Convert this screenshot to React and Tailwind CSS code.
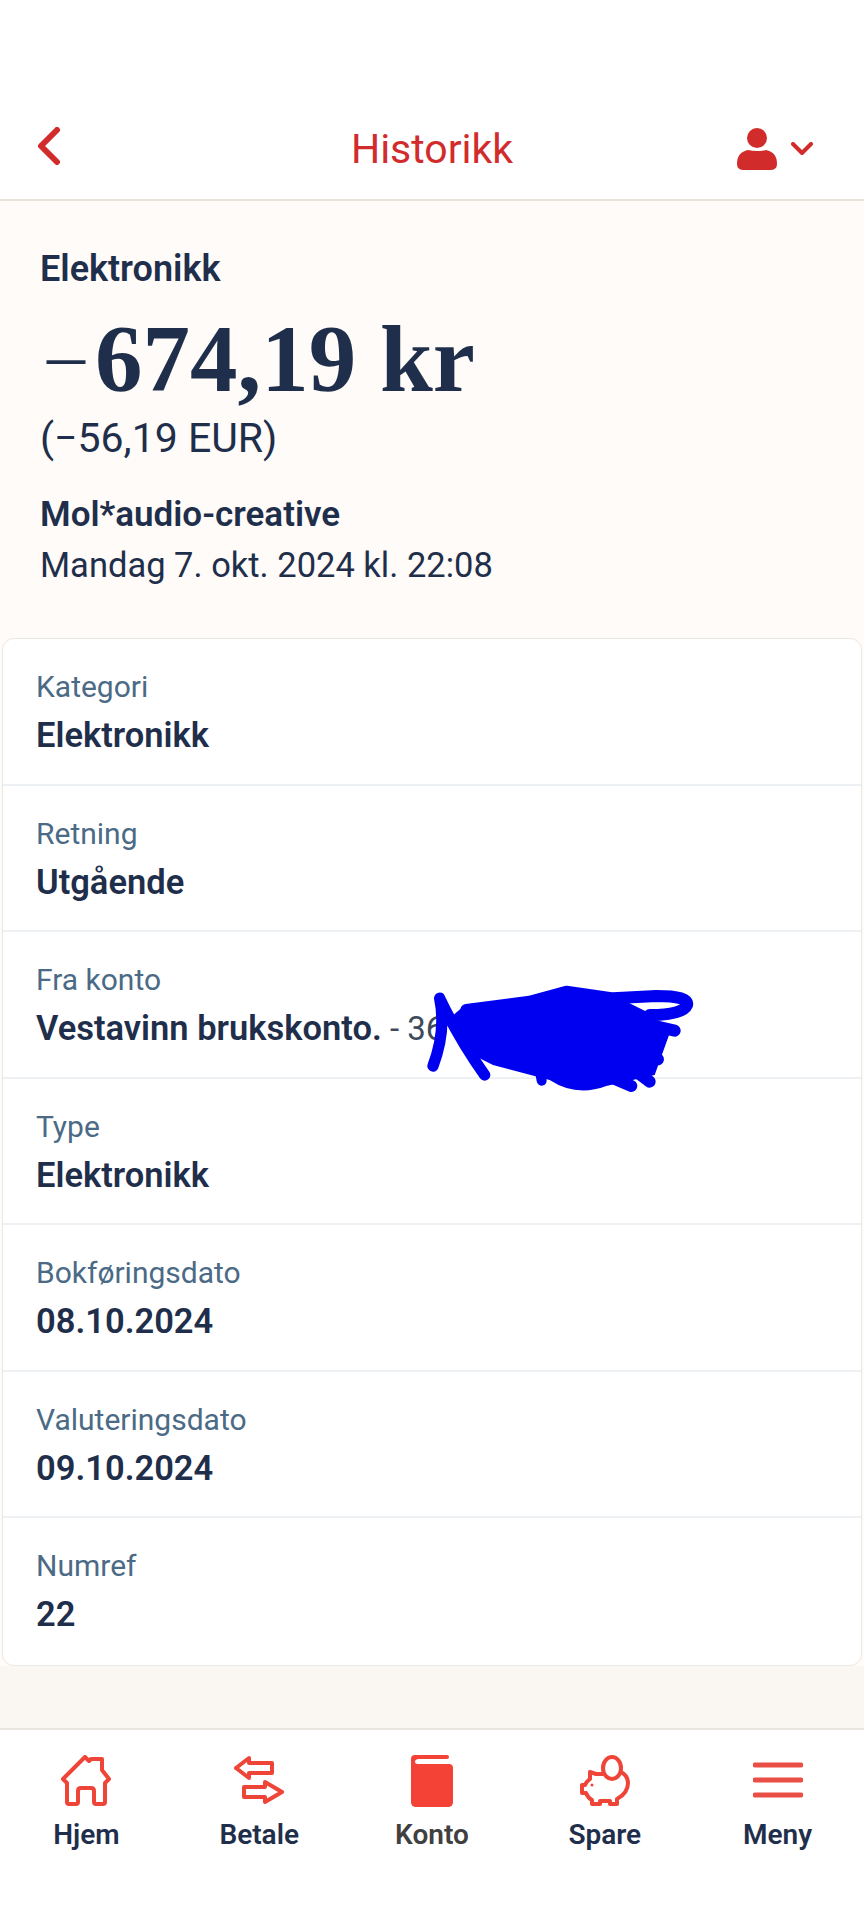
import React from 'react';

const rows = [
  { label: 'Kategori', value: 'Elektronikk' },
  { label: 'Retning', value: 'Utgående' },
  { label: 'Fra konto', value: 'Vestavinn brukskonto.', extra: ' - 36', scribble: true },
  { label: 'Type', value: 'Elektronikk' },
  { label: 'Bokføringsdato', value: '08.10.2024' },
  { label: 'Valuteringsdato', value: '09.10.2024' },
  { label: 'Numref', value: '22' },
];

function HomeIcon() {
  return (
    <svg width="50" height="52" viewBox="0 0 50 52" fill="none" stroke="#ef4438" strokeWidth="4" strokeLinejoin="round">
      <path d="M6 28 L2 24 L24 2 L28 6 L30 4 H41 V15 L48 24 L44 28 V47 Q44 49 42 49 H35 Q33 49 33 47 V36 Q33 33 30 33 H20 Q17 33 17 36 V47 Q17 49 15 49 H8 Q6 49 6 47 Z" />
    </svg>
  );
}

function TransferIcon() {
  return (
    <svg width="50" height="52" viewBox="0 0 50 52" fill="none" stroke="#ef4438" strokeWidth="4" strokeLinejoin="round">
      <path d="M2 13 L15 3 V8 H38 V18 H15 V23 Z" />
      <path d="M10 32 H31 V27 L48 37 L31 47 V42 H10 Z" />
    </svg>
  );
}

function BookIcon() {
  return (
    <svg width="42" height="52" viewBox="0 0 42 52">
      <path d="M4 0 H36 Q38 0 38 2 Q38 4 36 4 H8 Q4 4 4 7 Q4 9 8 9 H38 Q42 9 42 13 V47 Q42 52 37 52 H5 Q0 52 0 47 V4 Q0 0 4 0 Z" fill="#f44336" />
    </svg>
  );
}

function PiggyIcon() {
  return (
    <svg width="52" height="52" viewBox="0 0 52 52" fill="none" stroke="#ef4438" strokeWidth="4" strokeLinejoin="round">
      <ellipse cx="33" cy="13" rx="9" ry="11" />
      <path d="M24 19 H17 L11 17 V24 Q7 27 6 30 H3 V38 H7 Q9 43 13 45 V49 H21 V46 H31 V49 H38 V44 Q49 38 49 28 Q49 21 42 17" />
      <circle cx="13" cy="30" r="1.5" fill="#ef4438" stroke="none" />
    </svg>
  );
}

function MenuIcon() {
  return (
    <svg width="50" height="52" viewBox="0 0 50 52" fill="none" stroke="#ea4f46" strokeWidth="5" strokeLinecap="round">
      <path d="M2 10 H48" />
      <path d="M2 25 H48" />
      <path d="M2 40 H48" />
    </svg>
  );
}

const navItems = [
  { label: 'Hjem', icon: <HomeIcon /> },
  { label: 'Betale', icon: <TransferIcon /> },
  { label: 'Konto', icon: <BookIcon />, active: true },
  { label: 'Spare', icon: <PiggyIcon /> },
  { label: 'Meny', icon: <MenuIcon /> },
];

function Scribble() {
  return (
    <svg className="absolute left-[380px] top-[28px]" width="340" height="150" viewBox="0 0 1020 450">
      <g fill="none" stroke="#0000f0" strokeLinecap="round" strokeLinejoin="round">
        <path d="M150 318 Q190 210 170 115 Q230 240 305 345" strokeWidth="34" />
        <path d="M250 150 L440 125 L550 95 L690 115 L820 108 Q920 108 912 135 Q900 165 800 165" strokeWidth="36" />
        <path d="M780 190 L875 212" strokeWidth="36" />
        <path d="M780 270 L825 298" strokeWidth="36" />
        <path d="M740 320 L800 365" strokeWidth="36" />
        <path d="M680 350 L745 378" strokeWidth="36" />
        <path d="M470 330 L476 362" strokeWidth="30" />
      </g>
      <path d="M240 140 L440 115 L550 80 L690 105 L800 160 L860 220 L815 345 L670 378 Q580 412 500 360 L330 315 L240 270 L205 170 Z" fill="#0000f0" />
    </svg>
  );
}

export default function App() {
  return (
    <div className="flex flex-col w-[864px] h-[1920px] overflow-hidden bg-white font-['Roboto',sans-serif] text-[#1f2f4b]">
      {/* Header */}
      <header className="flex items-end h-[199px] shrink-0 bg-white pb-[21px] px-[37px] relative">
        <div className="grid grid-cols-3 items-center w-full h-[58px]">
          <svg className="mt-[-6px]" width="24" height="38" viewBox="0 0 24 38" fill="none" stroke="#d22b2b" strokeWidth="6" strokeLinecap="round" strokeLinejoin="round">
            <path d="M20 3 L4 19 L20 35" />
          </svg>
          <h1 className="text-center text-[41px] leading-none text-[#d22b2b] whitespace-nowrap">Historikk</h1>
          <div className="flex items-center justify-end gap-[14px] pr-[14px]">
            <svg width="40" height="42" viewBox="0 0 40 42" fill="#d22b2b">
              <circle cx="20" cy="10" r="10" />
              <path d="M11 22 Q20 24 29 22 Q40 24 40 36 Q40 42 33 42 H7 Q0 42 0 36 Q0 24 11 22 Z" />
            </svg>
            <svg width="22" height="14" viewBox="0 0 22 14" fill="none" stroke="#d22b2b" strokeWidth="4" strokeLinecap="round" strokeLinejoin="round">
              <path d="M2 2 L11 11 L20 2" />
            </svg>
          </div>
        </div>
      </header>

      {/* Main */}
      <main className="flex-1 bg-[#fefbf8] border-t-2 border-[#e8e2d8] flex flex-col">
        <section className="h-[437px] pt-[48px] pl-[40px]">
          <p className="text-[36px] leading-[40px] font-semibold">Elektronikk</p>
          <p className="flex items-baseline mt-[27px] font-['Liberation_Serif',serif] leading-[86px]">
            <span className="inline-block text-[76px] font-normal ml-[7px] -translate-y-[11px]">–</span>
            <span className="text-[95px] font-bold ml-[10px]">674,19 kr</span>
          </p>
          <p className="text-[41px] leading-[48px] mt-[6px]">(−56,19 EUR)</p>
          <p className="text-[35px] leading-[40px] font-semibold mt-[33px]">Mol*audio-creative</p>
          <p className="text-[34.5px] leading-[44px] mt-[8px]">Mandag 7. okt. 2024 kl. 22:08</p>
        </section>

        <section className="mx-[2px] bg-white border border-[#e8e8e4] rounded-[12px]">
          {rows.map((row, i) => (
            <div key={row.label} className={`relative h-[146.5px] pl-[33px] pt-[30px] ${i < rows.length - 1 ? 'border-b-2 border-[#eef1f3]' : ''}`}>
              <p className="text-[30px] leading-[36px] text-[#4b6a85]">{row.label}</p>
              <p className="text-[34.5px] leading-[44px] mt-[8px] font-semibold whitespace-nowrap">
                {row.value}
                {row.extra && <span className="font-normal text-[33px] text-[#3d4a5c]">{row.extra}</span>}
              </p>
              {row.scribble && <Scribble />}
            </div>
          ))}
        </section>
        <div className="flex-1 bg-[#faf7f2]" />
      </main>

      {/* Bottom nav */}
      <nav className="grid grid-cols-5 h-[192px] shrink-0 bg-white border-t-2 border-[#e8e4de] pt-[25px]">
        {navItems.map((item) => (
          <div key={item.label} className="flex flex-col items-center">
            <div className="flex items-center justify-center h-[52px]">{item.icon}</div>
            <span className={`mt-[10px] text-[28px] leading-[36px] font-semibold ${item.active ? 'text-[#404040]' : 'text-[#1f2f4b]'}`}>{item.label}</span>
          </div>
        ))}
      </nav>
    </div>
  );
}
